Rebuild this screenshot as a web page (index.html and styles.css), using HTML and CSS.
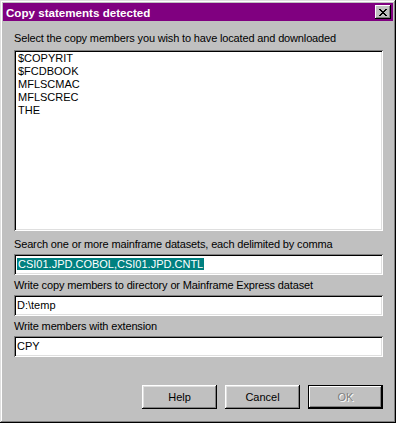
FILE: index.html
```html
<!DOCTYPE html>
<html lang="en">
<head>
  <meta charset="UTF-8" />
  <title>Copy statements detected</title>
  <link rel="stylesheet" href="styles.css">
</head>
<body>
  <div class="dialog">
    <div class="titleBar">
      <span class="titleText">Copy statements detected</span>
      <button class="closeBtn" aria-label="Close">
        <svg width="8" height="7" viewBox="0 0 8 7">
          <path d="M0 0h2v1h1v1h2V1h1V0h2v1H7v1H6v1H5v1h1v1h1v1h1v1H6V6H5V5H3v1H2v1H0V6h1V5h1V4h1V3H2V2H1V1H0z" fill="#000"/>
        </svg>
      </button>
    </div>

    <div class="content">
      <label class="fieldLabel first">Select the copy members you wish to have located and downloaded</label>
      <div class="listBox">
        <div class="listItem">$COPYRIT</div>
        <div class="listItem">$FCDBOOK</div>
        <div class="listItem">MFLSCMAC</div>
        <div class="listItem">MFLSCREC</div>
        <div class="listItem">THE</div>
      </div>

      <label class="fieldLabel search">Search one or more mainframe datasets, each delimited by comma</label>
      <div class="textField"><span class="selected">CSI01.JPD.COBOL,CSI01.JPD.CNTL</span></div>

      <label class="fieldLabel">Write copy members to directory or Mainframe Express dataset</label>
      <div class="textField">D:\temp</div>

      <label class="fieldLabel">Write members with extension</label>
      <div class="textField">CPY</div>

      <div class="buttonRow">
        <button class="pushBtn">Help</button>
        <button class="pushBtn">Cancel</button>
        <button class="pushBtn default" disabled>OK</button>
      </div>
    </div>
  </div>
</body>
</html>
```

FILE: styles.css
```css
* {
  box-sizing: border-box;
  margin: 0;
  padding: 0;
}

body {
  background: #c0c0c0;
  font-family: "Liberation Sans", Arial, sans-serif;
  font-size: 11px;
  color: #000;
}

.dialog {
  width: 396px;
  height: 423px;
  background: #c0c0c0;
  padding: 3px;
  box-shadow:
    inset -1px -1px #000,
    inset 1px 1px #dfdfdf,
    inset -2px -2px #808080,
    inset 2px 2px #fff;
}

.titleBar {
  height: 18px;
  background: #800080;
  display: flex;
  align-items: center;
  justify-content: space-between;
  padding: 0 2px 0 3px;
}

.titleText {
  color: #fff;
  font-weight: bold;
  font-size: 11.6px;
}

.closeBtn {
  width: 16px;
  height: 14px;
  background: #c0c0c0;
  border: none;
  display: flex;
  align-items: center;
  justify-content: center;
  box-shadow:
    inset -1px -1px #000,
    inset 1px 1px #fff,
    inset -2px -2px #808080;
}

.content {
  padding: 0 10px 0 11px;
}

.fieldLabel {
  display: block;
  line-height: 13px;
  margin-top: 4px;
  margin-bottom: 3px;
  white-space: nowrap;
  letter-spacing: -0.15px;
}

.fieldLabel.first {
  margin-top: 11px;
  margin-bottom: 5px;
}

.fieldLabel.search {
  margin-top: 7px;
}

.listBox,
.textField {
  background: #fff;
  box-shadow:
    inset 1px 1px #808080,
    inset -1px -1px #fff,
    inset 2px 2px #000,
    inset -2px -2px #dfdfdf;
}

.listBox {
  height: 181px;
  padding: 2px 2px;
}

.listItem {
  line-height: 13px;
  padding-left: 2px;
}

.textField {
  height: 21px;
  padding: 4px 2px 0 3px;
  line-height: 13px;
}

.selected {
  background: #008080;
  color: #fff;
  padding: 0 1px;
}

.buttonRow {
  display: flex;
  justify-content: flex-end;
  gap: 8px;
  margin-top: 28px;
}

.pushBtn {
  width: 75px;
  height: 24px;
  background: #c0c0c0;
  border: none;
  font-family: "Liberation Sans", Arial, sans-serif;
  font-size: 11px;
  color: #000;
  box-shadow:
    inset -1px -1px #000,
    inset 1px 1px #fff,
    inset -2px -2px #808080,
    inset 2px 2px #dfdfdf;
}

.pushBtn.default {
  box-shadow:
    inset 0 0 0 1px #000,
    inset -2px -2px #000,
    inset 2px 2px #fff,
    inset -3px -3px #808080;
}

.pushBtn:disabled {
  color: #808080;
  text-shadow: 1px 1px #fff;
}
```
